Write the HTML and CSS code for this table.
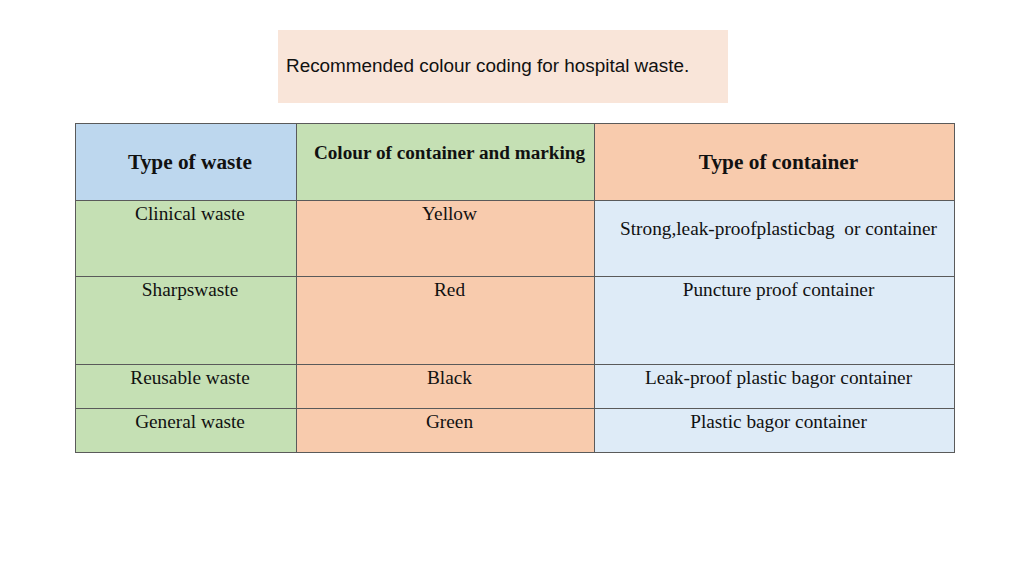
FILE: index.html
```html
<!DOCTYPE html>
<html>
<head>
<meta charset="utf-8">
<link rel="stylesheet" href="styles.css">
</head>
<body>
<div class="page">
  <div class="title-box">
    <p class="title">Recommended colour coding for hospital waste.</p>
  </div>
  <table class="waste">
    <colgroup>
      <col class="c1"><col class="c2"><col class="c3">
    </colgroup>
    <thead>
      <tr class="head">
        <th class="h-blue">Type of waste</th>
        <th class="h-green h-top">Colour of container and marking</th>
        <th class="h-orange">Type of container</th>
      </tr>
    </thead>
    <tbody>
      <tr class="r1">
        <td class="green">Clinical waste</td>
        <td class="orange">Yellow</td>
        <td class="blue lower">Strong,leak-proofplasticbag&nbsp; or container</td>
      </tr>
      <tr class="r2">
        <td class="green">Sharpswaste</td>
        <td class="orange">Red</td>
        <td class="blue">Puncture proof container</td>
      </tr>
      <tr class="r3">
        <td class="green">Reusable waste</td>
        <td class="orange">Black</td>
        <td class="blue">Leak-proof plastic bagor container</td>
      </tr>
      <tr class="r4">
        <td class="green">General waste</td>
        <td class="orange">Green</td>
        <td class="blue">Plastic bagor container</td>
      </tr>
    </tbody>
  </table>
</div>
</body>
</html>
```

FILE: styles.css
```css
html, body {
  margin: 0;
  padding: 0;
  background: #ffffff;
}

.page {
  width: 1024px;
  height: 576px;
  padding-top: 30px;
  box-sizing: border-box;
}

.title-box {
  width: 450px;
  height: 73px;
  margin-left: 278px;
  background: #f9e5d9;
  display: flex;
  align-items: center;
  padding-left: 8px;
  box-sizing: border-box;
}

.title {
  margin: 0;
  font-family: "Liberation Sans", Arial, sans-serif;
  font-size: 18.9px;
  color: #111111;
  padding-bottom: 2px;
}

.waste {
  margin-top: 20px;
  margin-left: 75px;
  border-collapse: collapse;
  table-layout: fixed;
  width: 879px;
  font-family: "Liberation Serif", "Times New Roman", serif;
  color: #111111;
}

.c1 { width: 221px; }
.c2 { width: 298px; }
.c3 { width: 360px; }

.waste th,
.waste td {
  border: 1px solid #5a5a5a;
  text-align: center;
  padding: 0 0 0 8px;
}

.waste th {
  font-weight: bold;
  font-size: 21.3px;
  vertical-align: middle;
  line-height: 24px;
}

.waste th.h-top {
  vertical-align: top;
  font-size: 19.2px;
  padding-top: 17px;
}

.waste td {
  font-size: 19.3px;
  line-height: 22px;
  vertical-align: top;
  padding-top: 2px;
}

.waste td.lower {
  padding-top: 17px;
}

.head { height: 77px; }
.r1 { height: 76px; }
.r2 { height: 88px; }
.r3 { height: 44px; }
.r4 { height: 44px; }

.h-blue { background: #bdd7ee; }
.h-green { background: #c5e0b4; }
.h-orange { background: #f8cbad; }
.green { background: #c5e0b4; }
.orange { background: #f8cbad; }
.blue { background: #deebf7; }
```
